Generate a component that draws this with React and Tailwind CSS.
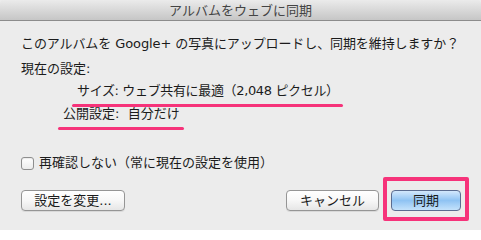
import React from 'react';

const font = "font-['DejaVu_Sans','Noto_Sans_CJK_JP',sans-serif]";

function Marked({ children, className = '' }) {
  // pink marker line under a settings row
  return (
    <span className={`relative inline-block ${className}`}>
      {children}
      <span className="absolute left-[-5px] right-[-4px] bottom-[-7px] h-[3px] rounded-full bg-[#f6337a]" />
    </span>
  );
}

export default function App() {
  return (
    <div className={`w-[481px] h-[230px] bg-[#ececec] text-[13px] text-[#1b1b1b] overflow-hidden ${font}`}>
      {/* Title bar */}
      <div className="h-[21px] flex items-center justify-center bg-gradient-to-b from-[#ebebeb] to-[#c6c6c6] border-b border-[#8c8c8c] rounded-t-[4px] text-[#444] leading-none">
        アルバムをウェブに同期
      </div>

      <div className="pl-[21px] pr-[20px]">
        <div className="mt-[14px] h-[18px] leading-[18px] whitespace-nowrap tracking-[-0.1px]">
          このアルバムを Google+ の写真にアップロードし、同期を維持しますか？
        </div>
        <div className="mt-[7px] h-[18px] leading-[18px]">現在の設定:</div>
        <div className="mt-[4px] h-[18px] leading-[18px] pl-[56px] whitespace-nowrap">
          <Marked className="tracking-[-0.35px]">サイズ: ウェブ共有に最適（2,048 ピクセル）</Marked>
        </div>
        <div className="mt-[5px] h-[18px] leading-[18px] pl-[42px] whitespace-nowrap">
          <Marked>公開設定:&nbsp; 自分だけ</Marked>
        </div>

        {/* Checkbox row */}
        <div className="mt-[31px] h-[18px] flex items-center gap-[5px]">
          <span className="w-[13px] h-[13px] rounded-[3px] border border-[#8e8e8e] bg-gradient-to-b from-white to-[#ececec] shadow-[inset_0_1px_1px_rgba(0,0,0,0.08)]" />
          <span className="leading-[18px]">再確認しない（常に現在の設定を使用）</span>
        </div>

        {/* Buttons */}
        <div className="mt-[18px] flex items-center">
          <button className="w-[104px] h-[21px] rounded-[4px] border border-[#959595] bg-gradient-to-b from-white via-[#f7f7f7] to-[#e6e6e6] shadow-[0_1px_0_rgba(0,0,0,0.08)] leading-none">
            設定を変更...
          </button>
          <div className="flex-1" />
          <button className="w-[93px] h-[21px] rounded-[4px] border border-[#959595] bg-gradient-to-b from-white via-[#f7f7f7] to-[#e6e6e6] shadow-[0_1px_0_rgba(0,0,0,0.08)] leading-none">
            キャンセル
          </button>
          <div className="relative ml-[12px]">
            <button className="w-[70px] h-[21px] rounded-[4px] border border-[#5b6c90] bg-gradient-to-b from-[#d3e8fc] via-[#8fc3f3] to-[#c4e2fb] leading-none">
              同期
            </button>
            <span className="absolute left-[-8px] right-[-8px] top-[-13px] bottom-[-10px] border-[4px] border-[#f6337a] rounded-[2px]" />
          </div>
        </div>
      </div>
    </div>
  );
}
